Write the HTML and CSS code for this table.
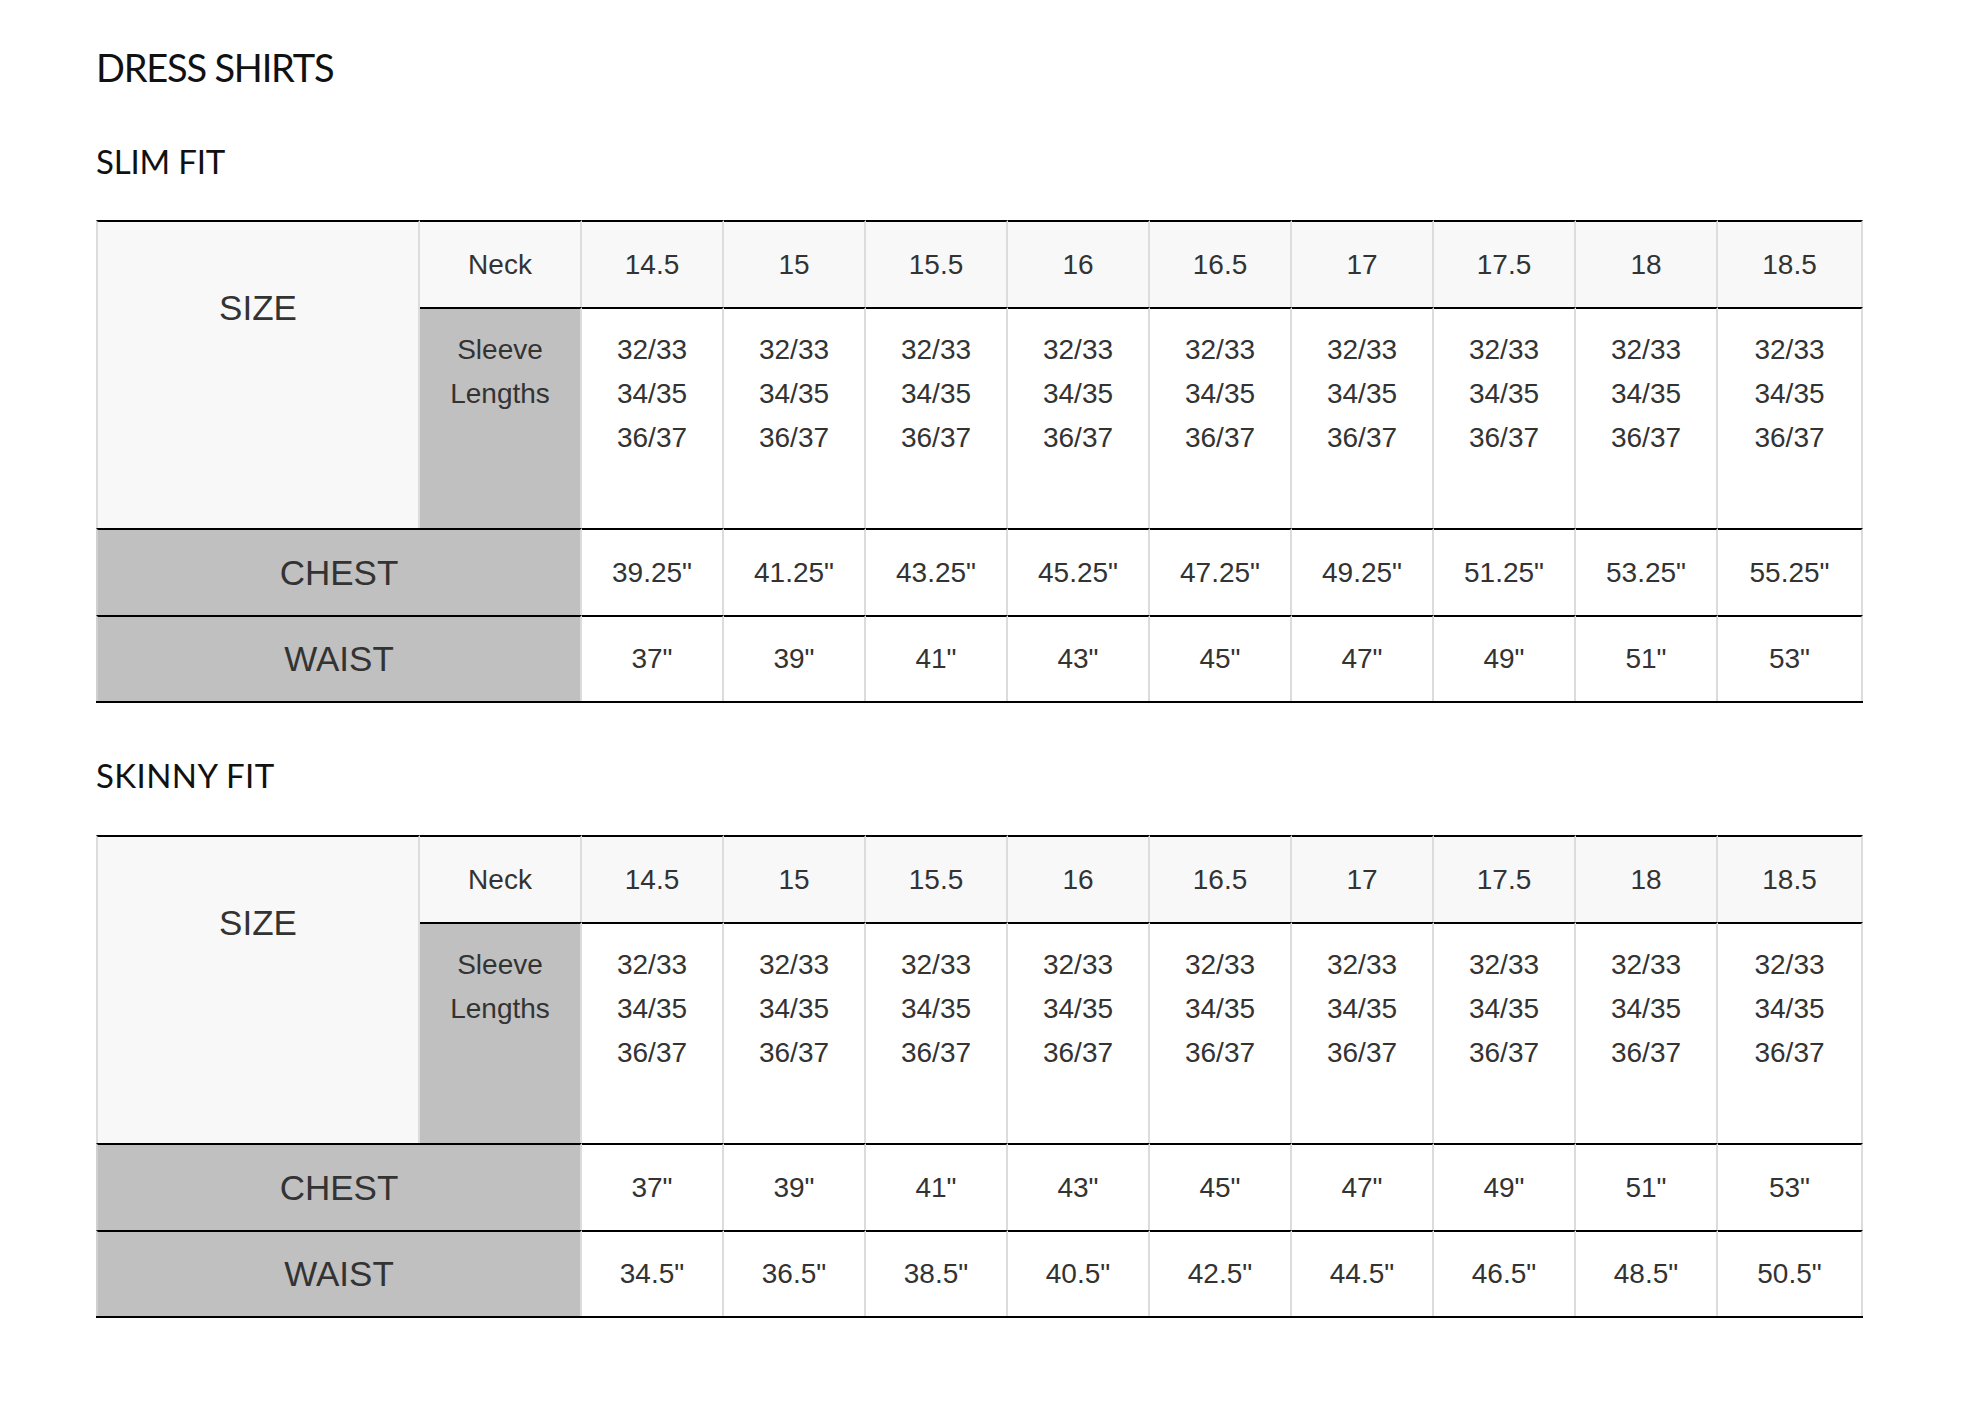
FILE: index.html
```html
<!DOCTYPE html>
<html lang="en">
<head>
<meta charset="utf-8">
<title>Dress Shirts Size Chart</title>
<link rel="stylesheet" href="styles.css">
</head>
<body>
<main class="page">
  <h1 class="title">DRESS SHIRTS</h1>

  <h2 class="fit fit-slim">SLIM FIT</h2>
  <div class="chart">
    <div class="cell size-label">SIZE</div>
    <div class="cell head">Neck</div>
    <div class="cell head">14.5</div>
    <div class="cell head">15</div>
    <div class="cell head">15.5</div>
    <div class="cell head">16</div>
    <div class="cell head">16.5</div>
    <div class="cell head">17</div>
    <div class="cell head">17.5</div>
    <div class="cell head">18</div>
    <div class="cell head">18.5</div>

    <div class="cell sleeve-label">Sleeve<br>Lengths</div>
    <div class="cell sleeve">32/33<br>34/35<br>36/37</div>
    <div class="cell sleeve">32/33<br>34/35<br>36/37</div>
    <div class="cell sleeve">32/33<br>34/35<br>36/37</div>
    <div class="cell sleeve">32/33<br>34/35<br>36/37</div>
    <div class="cell sleeve">32/33<br>34/35<br>36/37</div>
    <div class="cell sleeve">32/33<br>34/35<br>36/37</div>
    <div class="cell sleeve">32/33<br>34/35<br>36/37</div>
    <div class="cell sleeve">32/33<br>34/35<br>36/37</div>
    <div class="cell sleeve">32/33<br>34/35<br>36/37</div>

    <div class="cell row-label">CHEST</div>
    <div class="cell val">39.25"</div>
    <div class="cell val">41.25"</div>
    <div class="cell val">43.25"</div>
    <div class="cell val">45.25"</div>
    <div class="cell val">47.25"</div>
    <div class="cell val">49.25"</div>
    <div class="cell val">51.25"</div>
    <div class="cell val">53.25"</div>
    <div class="cell val">55.25"</div>

    <div class="cell row-label">WAIST</div>
    <div class="cell val">37"</div>
    <div class="cell val">39"</div>
    <div class="cell val">41"</div>
    <div class="cell val">43"</div>
    <div class="cell val">45"</div>
    <div class="cell val">47"</div>
    <div class="cell val">49"</div>
    <div class="cell val">51"</div>
    <div class="cell val">53"</div>
  </div>

  <h2 class="fit fit-skinny">SKINNY FIT</h2>
  <div class="chart">
    <div class="cell size-label">SIZE</div>
    <div class="cell head">Neck</div>
    <div class="cell head">14.5</div>
    <div class="cell head">15</div>
    <div class="cell head">15.5</div>
    <div class="cell head">16</div>
    <div class="cell head">16.5</div>
    <div class="cell head">17</div>
    <div class="cell head">17.5</div>
    <div class="cell head">18</div>
    <div class="cell head">18.5</div>

    <div class="cell sleeve-label">Sleeve<br>Lengths</div>
    <div class="cell sleeve">32/33<br>34/35<br>36/37</div>
    <div class="cell sleeve">32/33<br>34/35<br>36/37</div>
    <div class="cell sleeve">32/33<br>34/35<br>36/37</div>
    <div class="cell sleeve">32/33<br>34/35<br>36/37</div>
    <div class="cell sleeve">32/33<br>34/35<br>36/37</div>
    <div class="cell sleeve">32/33<br>34/35<br>36/37</div>
    <div class="cell sleeve">32/33<br>34/35<br>36/37</div>
    <div class="cell sleeve">32/33<br>34/35<br>36/37</div>
    <div class="cell sleeve">32/33<br>34/35<br>36/37</div>

    <div class="cell row-label">CHEST</div>
    <div class="cell val">37"</div>
    <div class="cell val">39"</div>
    <div class="cell val">41"</div>
    <div class="cell val">43"</div>
    <div class="cell val">45"</div>
    <div class="cell val">47"</div>
    <div class="cell val">49"</div>
    <div class="cell val">51"</div>
    <div class="cell val">53"</div>

    <div class="cell row-label">WAIST</div>
    <div class="cell val">34.5"</div>
    <div class="cell val">36.5"</div>
    <div class="cell val">38.5"</div>
    <div class="cell val">40.5"</div>
    <div class="cell val">42.5"</div>
    <div class="cell val">44.5"</div>
    <div class="cell val">46.5"</div>
    <div class="cell val">48.5"</div>
    <div class="cell val">50.5"</div>
  </div>
</main>
</body>
</html>
```

FILE: styles.css
```css
html, body {
  margin: 0;
  padding: 0;
  background: #ffffff;
}

.page {
  padding: 44px 0 80px 96px;
  width: 1767px;
}

.title {
  margin: 0;
  font-family: Lato, "Open Sans", sans-serif;
  font-weight: 400;
  font-size: 38px;
  line-height: 47px;
  color: #111;
  letter-spacing: -1.2px;
}

.fit {
  margin: 0;
  font-family: Lato, "Open Sans", sans-serif;
  font-weight: 400;
  font-size: 33px;
  line-height: 40px;
  color: #111;
  letter-spacing: -0.2px;
}

.fit-slim {
  margin-top: 50px;
  margin-bottom: 39px;
}

.fit-skinny {
  margin-top: 52px;
  margin-bottom: 40px;
  letter-spacing: 0.4px;
}

.chart {
  display: grid;
  grid-template-columns: 324px 162px repeat(8, 142px) 1fr;
  grid-template-rows: 87px 221px 87px 86px;
  width: 1767px;
  border-bottom: 2px solid #000;
  font-family: "Liberation Sans", Arial, sans-serif;
  color: #333;
}

.cell {
  box-sizing: border-box;
  border-top: 2px solid #000;
  border-right: 2px solid #dcdcdc;
  background: #fff;
  font-size: 28px;
  text-align: center;
}

.head,
.val {
  display: flex;
  align-items: center;
  justify-content: center;
}

.head {
  background: #f8f8f8;
}

.size-label {
  grid-row: 1 / span 2;
  background: #f8f8f8;
  border-left: 2px solid #dcdcdc;
  font-size: 35px;
  line-height: 44px;
  padding-top: 64px;
}

.sleeve-label {
  background: #c0c0c0;
  line-height: 44px;
  padding-top: 19px;
}

.sleeve {
  line-height: 44px;
  padding-top: 19px;
}

.row-label {
  grid-column: 1 / span 2;
  background: #c0c0c0;
  border-left: 2px solid #d0d0d0;
  display: flex;
  align-items: center;
  justify-content: center;
  font-size: 35px;
}
```
